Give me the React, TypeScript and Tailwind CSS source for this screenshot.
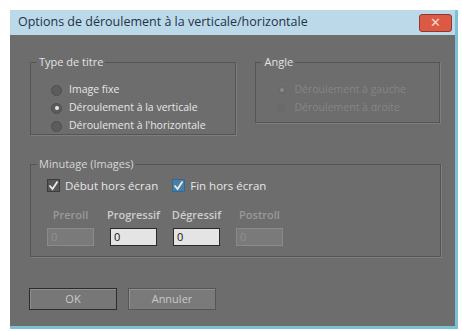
import React from 'react';

const font = { fontFamily: '"Open Sans", "DejaVu Sans", sans-serif' };

function Radio({ checked, disabled, label }: { checked?: boolean; disabled?: boolean; label: string }) {
  return (
    <div className="flex items-center gap-[7px] h-[18px] text-[10.5px]">
      <span
        className={
          'w-[11px] h-[11px] rounded-full flex items-center justify-center border ' +
          (disabled ? 'border-[#707070] bg-[#6a6a6a]' : 'border-[#4e4e4e] bg-[#5c5c5c]')
        }>
        {checked &&
        <span className={'w-[4px] h-[4px] rounded-full ' + (disabled ? 'bg-[#8a8a8a]' : 'bg-[#e8e8e8]')} />
        }
      </span>
      <span className={disabled ? 'text-[#858585]' : 'text-[#e6e6e6]'}>{label}</span>
    </div>);

}

function Check({ label, focus }: { label: string; focus?: boolean }) {
  return (
    <div className="flex items-center gap-[5px] text-[11.5px]">
      <span
        className={
          'w-[13px] h-[13px] flex items-center justify-center border ' +
          (focus ? 'border-[#2f6b95] bg-[#4a7fa5]' : 'border-[#3c3c3c] bg-[#585858]')
        }>
        <svg width="11" height="11" viewBox="0 0 11 11">
          <path d="M1.5 5.5 L4.5 9 L9.5 1.5" fill="none" stroke="#ececec" strokeWidth="1.8" />
        </svg>
      </span>
      <span className="text-[#e6e6e6]">{label}</span>
    </div>);

}

function Field({ label, disabled }: { label: string; disabled?: boolean }) {
  return (
    <div className="flex flex-col items-center w-[47px] gap-[4px]">
      <span className={'font-semibold whitespace-nowrap ' + (disabled ? 'text-[#9a9a9a]' : 'text-[#cdcdcd]')}>{label}</span>
      <div
        className={
          'w-[47px] h-[18px] flex items-center px-[3px] text-[11px] ' +
          (disabled ?
          'bg-[#7a7a7a] border border-[#8a8a8a] text-[#909090]' :
          'bg-[#e4e4e4] border border-[#2a2a2a] text-[#111]')
        }>
        0
      </div>
    </div>);

}

export default function App() {
  return (
    <div className="w-[462px] h-[331px] bg-white pl-[10px] pt-[10px] text-[11px]" style={font}>
      <div className="w-[448px] h-[319px] flex flex-col border-r-[3px] border-b-[3px] border-[#7cc0d8]">
        <div className="h-[25px] bg-[#bcd9ea] flex items-center justify-between pl-[8px] pr-[3px]">
          <span className="text-[12.5px] text-[#1f3347]">Options de déroulement à la verticale/horizontale</span>
          <div className="w-[33px] h-[18px] rounded-[3px] bg-[#dc5a44] border border-[#8e3a30] flex items-center justify-center">
            <span className="text-[#f4d8d0] text-[13px] font-bold leading-none">✕</span>
          </div>
        </div>

        <div className="flex-1 bg-[#6d6d6d] pl-[20px] pr-[15px] pt-[21px]">
          <div className="flex gap-[19px]">
            <fieldset className="w-[207px] h-[79px] border border-[#555] shadow-[1px_1px_0_#7e7e7e] pl-[6px] pr-[6px]">
              <legend className="text-[#e2e2e2] px-[2px] leading-[12px]">Type de titre</legend>
              <div className="mt-[13px] pl-[14px]">
                <Radio label="Image fixe" />
                <Radio label="Déroulement à la verticale" checked />
                <Radio label="Déroulement à l'horizontale" />
              </div>
            </fieldset>
            <fieldset className="w-[185px] h-[67px] border border-[#555] shadow-[1px_1px_0_#7e7e7e] pl-[6px] pr-[6px]">
              <legend className="text-[#e2e2e2] px-[2px] leading-[12px]">Angle</legend>
              <div className="mt-[13px] pl-[14px]">
                <Radio label="Déroulement à gauche" checked disabled />
                <Radio label="Déroulement à droite" disabled />
              </div>
            </fieldset>
          </div>

          <fieldset className="mt-[23px] w-[411px] h-[99px] border border-[#555] shadow-[1px_1px_0_#7e7e7e] pl-[6px]">
            <legend className="text-[#d6d6d6] px-[2px] leading-[12px]">Minutage (Images)</legend>
            <div className="flex gap-[14px] pl-[10px] mt-[7px]">
              <Check label="Début hors écran" />
              <Check label="Fin hors écran" focus />
            </div>
            <div className="flex gap-[16px] pl-[10px] mt-[13px]">
              <Field label="Preroll" disabled />
              <Field label="Progressif" />
              <Field label="Dégressif" />
              <Field label="Postroll" disabled />
            </div>
          </fieldset>

          <div className="flex gap-[11px] mt-[31px] -ml-[1px]">
            <div className="w-[88px] h-[22px] border border-[#2c2c2c] bg-[#777] shadow-[inset_1px_1px_0_#8e8e8e] flex items-center justify-center text-[#c8c8c8]">
              OK
            </div>
            <div className="w-[88px] h-[22px] border border-[#555] bg-[#7a7a7a] shadow-[inset_1px_1px_0_#909090] flex items-center justify-center text-[#c8c8c8]">
              Annuler
            </div>
          </div>
        </div>
      </div>
    </div>);

}
